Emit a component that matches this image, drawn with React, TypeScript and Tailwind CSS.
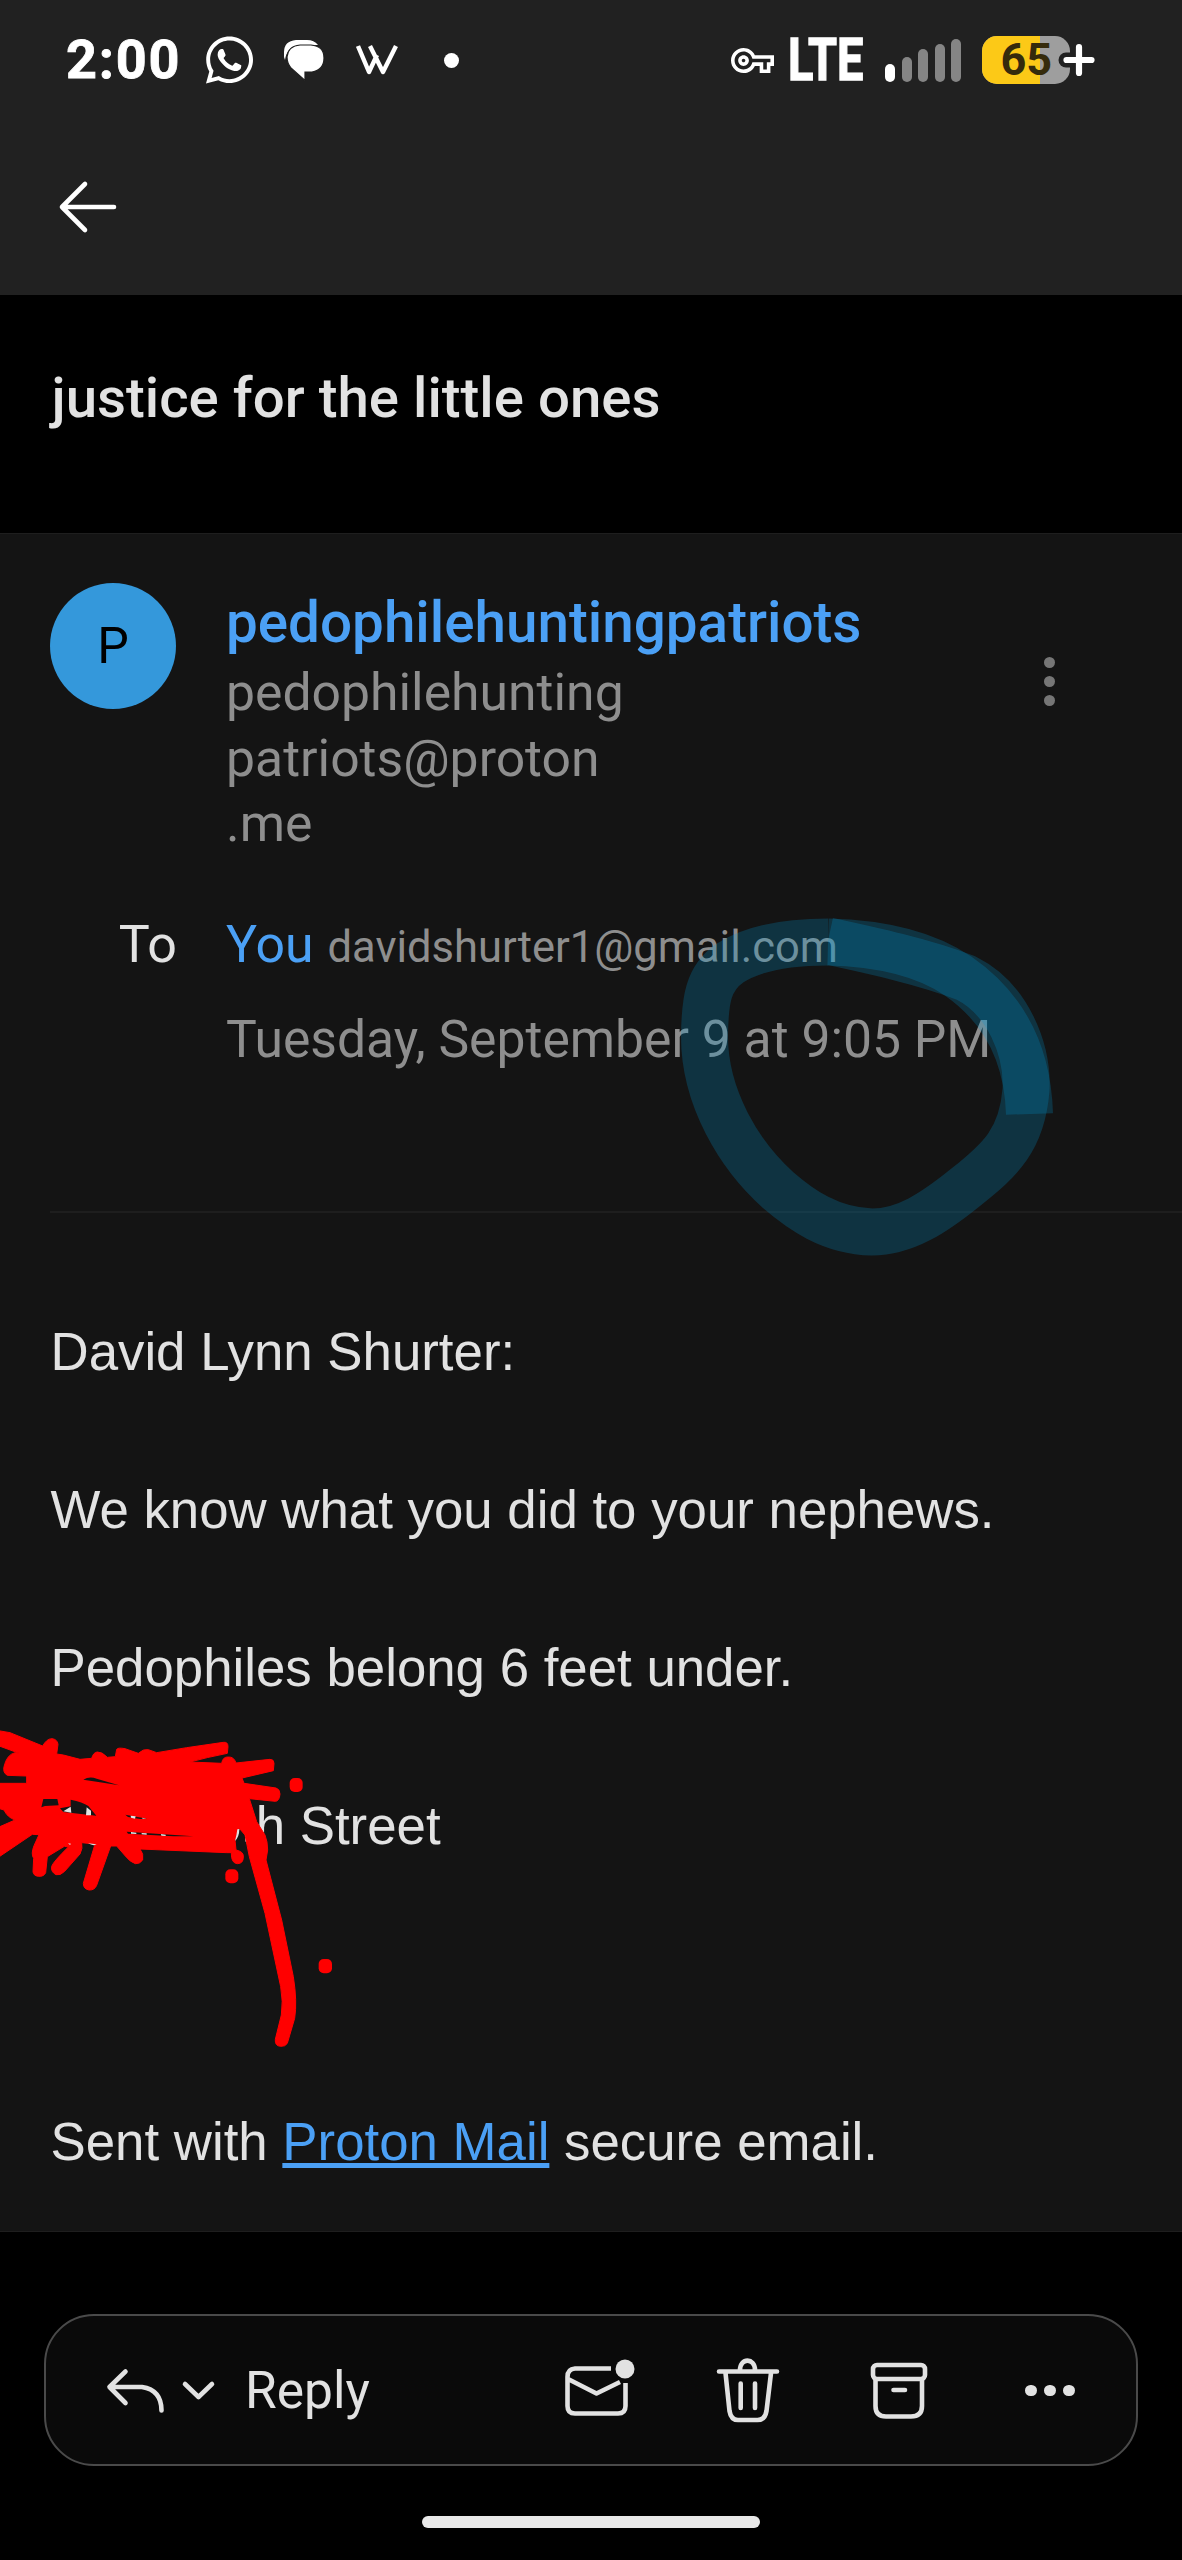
import type { ReactNode } from "react";
import { FaWhatsapp } from "react-icons/fa";
import { MdOutlineVpnKey } from "react-icons/md";

function ChatIcon() {
  return (
    <svg className="ml-[30px] h-[42px] w-[42px] shrink-0" viewBox="0 0 42 42">
      <path d="M1 18V13Q1 2 13 1H24Q31 1 35 6H17Q4 7 2 21Z" fill="#fff" />
      <path
        d="M17 6H28Q41 7 41 19T29 33H22V41.500L8 29Q4 24 4 18Q5 7 17 6Z"
        fill="#fff"
        stroke="#212121"
        strokeWidth="1.200"
      />
    </svg>
  );
}

function WIcon() {
  return (
    <svg
      className="ml-[31px] h-[30px] w-[42px] shrink-0"
      viewBox="0 0 42 30"
      fill="none"
      stroke="#fff"
      strokeWidth="4.400"
      strokeLinejoin="round"
    >
      <path d="M2 1L13 27L21 10M14 1L27 27L40 1" />
    </svg>
  );
}

function SignalBars() {
  return (
    <div className="ml-[20px] flex h-[43px] shrink-0 items-end gap-[6.600px]">
      <i className="h-[18px] w-[10px] rounded-full bg-white" />
      <i className="h-[25px] w-[10px] rounded-full bg-[#858585]" />
      <i className="h-[33px] w-[10px] rounded-full bg-[#858585]" />
      <i className="h-[38px] w-[10px] rounded-full bg-[#858585]" />
      <i className="h-[43px] w-[10px] rounded-full bg-[#858585]" />
    </div>
  );
}

function Battery() {
  return (
    <div className="relative ml-[21px] h-[48px] w-[88px] shrink-0">
      <div className="flex h-full w-full overflow-hidden rounded-[15px] bg-[#9e9e9e]">
        <div className="h-full w-[58px] bg-[#fcc917]" />
      </div>
      <span className="absolute top-0 left-[18px] font-[Roboto,sans-serif] text-[45px] leading-[48px] font-bold text-[#352b0c]">
        65
      </span>
      <svg className="absolute top-[4px] left-[76px] h-[40px] w-[40px]" viewBox="0 0 40 40" strokeLinecap="round">
        <path d="M8 20H12" stroke="#212121" strokeWidth="15" />
        <path d="M8.500 20H33.500M21 7V33" stroke="#fff" strokeWidth="6.200" />
      </svg>
    </div>
  );
}

function StatusBar() {
  return (
    <div className="flex h-[120px] items-center pl-[66px]">
      <span className="w-[116px] shrink-0 text-[54px] leading-[64px] font-bold tracking-[1.800px] text-white [-webkit-text-stroke:0.8px_white]">
        2:00
      </span>
      <FaWhatsapp className="ml-[24px] h-[54px] w-[47px] shrink-0 text-white" />
      <ChatIcon />
      <WIcon />
      <i className="ml-[46px] size-[15px] shrink-0 rounded-full bg-white" />
      <MdOutlineVpnKey className="ml-[272px] size-[43px] shrink-0 text-white" />
      <span className="ml-[14px] w-[77px] shrink-0 origin-left scale-x-[0.780] text-[60px] leading-[64px] font-bold text-white [-webkit-text-stroke:1.5px_white]">
        LTE
      </span>
      <SignalBars />
      <Battery />
    </div>
  );
}

function BackArrow() {
  return (
    <svg
      className="mt-[57px] ml-[57px] h-[60px] w-[60px]"
      viewBox="0 0 60 60"
      fill="none"
      stroke="#fff"
      strokeWidth="4.600"
      strokeLinecap="round"
      strokeLinejoin="round"
    >
      <path d="M28 7L5 30L28 53M5 30H57" />
    </svg>
  );
}

function MessageHeader() {
  return (
    <header className="flex h-[677px] pt-[49px] pl-[50px]">
      <div className="w-[176px] shrink-0">
        <div className="flex size-[126px] items-center justify-center rounded-full bg-[#3498db] text-[50px] leading-none text-black">
          P
        </div>
        <div className="mt-[206px] w-[127px] text-right text-[52px] leading-[60px] text-[#e2e2e2]">To</div>
      </div>
      <div className="w-[780px] shrink-0 pt-[7px]">
        <h2 className="text-[56.600px] leading-[66px] font-medium text-[#4ba0f5]">pedophilehuntingpatriots</h2>
        <p className="mt-[4px] text-[51.700px] leading-[65.600px] text-[#8e8e8e]">
          pedophilehunting
          <br />
          patriots@proton
          <br />
          .me
        </p>
        <p className="mt-[58px] flex h-[60px] items-baseline gap-[14px] leading-[60px]">
          <span className="text-[51.800px] text-[#4ba0f5]">You</span>
          <span className="text-[43.500px] text-[#8e8e8e]">davidshurter1@gmail.com</span>
        </p>
        <p className="mt-[35px] text-[51.650px] leading-[60px] whitespace-nowrap text-[#8e8e8e]">
          Tuesday, September 9 at 9:05 PM
        </p>
      </div>
      <div className="flex w-[86px] flex-col items-center gap-[8px] pt-[74px]">
        <i className="size-[11px] rounded-full bg-[#767676]" />
        <i className="size-[11px] rounded-full bg-[#767676]" />
        <i className="size-[11px] rounded-full bg-[#767676]" />
      </div>
    </header>
  );
}

function Line({ children }: { children?: ReactNode }) {
  return <p className="h-[79.100px] whitespace-nowrap">{children}</p>;
}

function MessageBody() {
  return (
    <div className="pt-[98.500px] pl-[50.500px] font-['Liberation_Sans',Arial,sans-serif] text-[52.800px] leading-[79.100px] text-[#e2e2e2]">
      <Line>David Lynn Shurter:</Line>
      <Line />
      <Line>We know what you did to your nephews.</Line>
      <Line />
      <Line>Pedophiles belong 6 feet under.</Line>
      <Line />
      <Line>
        <span className="pl-[190.500px]">th Street</span>
      </Line>
      <Line />
      <Line />
      <Line />
      <Line>
        Sent with{" "}
        <span className="text-[#4ba0f5] underline decoration-[5px] underline-offset-[3px] [text-decoration-skip-ink:none]">
          Proton Mail
        </span>{" "}
        secure email.
      </Line>
    </div>
  );
}

/* Translucent marker loop around the time of day. */
function HighlighterLoop() {
  return (
    <svg
      className="pointer-events-none absolute top-[880px] left-[660px] h-[400px] w-[420px]"
      viewBox="660 880 420 400"
      fill="none"
      stroke="#0096d2"
      strokeOpacity="0.240"
      strokeWidth="47"
      strokeLinejoin="round"
    >
      <path d="M828 941C870 950 925 962 966 978C1008 999 1028 1050 1026 1090C1022 1140 1000 1160 966 1187C934 1213 905 1232 872 1232C830 1231 800 1209 778 1190C740 1156 704 1098 704.500 1035C705 1000 708 978 730 963C755 947 792 942 828 942" />
      <path d="M828 942C870 943 920 950 958 976C1010 1012 1028 1062 1029.500 1114" />
    </svg>
  );
}

/* Red scribble that hides the house number. */
function Scribble() {
  return (
    <svg className="pointer-events-none absolute top-[1700px] left-0 h-[380px] w-[480px]" viewBox="0 0 1440 1140">
      <path
        fill="#ff0000"
        stroke="#ff0000"
        strokeWidth="3"
        strokeLinejoin="round"
        d="M-5 92L30 98L128 138Q140 116 156 116Q172 118 174 133L170 162L190 165L240 178L275 175Q280 157 292 156Q306 155 322 172L346 170L350 148Q354 142 375 146L415 160Q430 146 445 149L470 158L560 143L670 127Q684 125 684 140L682 160Q620 172 570 186L665 190Q668 170 685 171Q702 170 708 189L810 178Q822 178 822 190L820 212L726 234L732 250L828 264Q840 268 840 282Q838 304 826 304L748 296L770 365L795 405Q803 425 803 450L798 480L845 660L880 830Q892 905 884 955L862 1030Q856 1040 842 1039Q824 1038 826 1018L844 945Q850 905 842 860L795 640L748 470L735 405L718 385L705 420L708 450Q732 455 730 471Q730 491 712 491Q693 490 694 458L680 458L420 447Q432 462 428 480Q420 492 406 491Q390 486 376 468L350 438L332 438L290 556Q284 571 267 570Q250 567 250 550L285 432L245 428Q249 445 240 462L194 514Q180 528 168 524Q152 516 155 499Q160 485 205 441L193 439L142 470L137 518Q132 530 115 529Q100 527 99 515L101 475Q92 462 102 437L117 404L97 403L-5 472V382L45 360Q22 352 12 330L-5 325V250L80 250V228L22 226Q8 218 12 200Q20 164 45 158L58 160L-5 137Z"
      />
      <g fill="#ff0000">
        <rect x="869" y="234" width="39" height="42" rx="15" />
        <rect x="676" y="508" width="39" height="42" rx="15" />
        <rect x="956" y="777" width="40" height="43" rx="15" />
      </g>
      <g fill="#141414">
        <path d="M250 239Q268 228 290 236L357 256L300 247Z" />
        <path d="M130 297H172L176 316L135 318L124 322Z" />
        <path d="M212 299Q248 306 265 318L289 347L190 336L180 325L212 319Z" />
        <path d="M376 344L442 356L420 357L384 351Z" />
        <path d="M380 395L580 409L520 409L384 401Z" />
      </g>
      <g fill="#e2e2e2">
        <path d="M190 334L212 320L214 338Z" />
        <path d="M260 322L273 332V346H258Z" />
        <path d="M392 347L407 349L405 356L393 353ZM426 353L440 356H428Z" />
        <path d="M393 396L409 398V402L393 401ZM425 399L440 400V404L425 403ZM483 402L497 404V408L484 407Z" />
        <path d="M204 430L213 431L210 435ZM264 430L290 433Q280 439 264 430Z" />
        <path d="M712 388L718 387Q718 410 705 423Q710 405 712 388Z" />
      </g>
    </svg>
  );
}

const stroke = {
  fill: "none",
  stroke: "#e2e2e2",
  strokeWidth: 4.6,
  strokeLinecap: "round",
  strokeLinejoin: "round",
} as const;

function BottomBar() {
  return (
    <nav className="mx-[44px] mt-[82px] flex h-[152px] items-center rounded-[50px] border-2 border-[#4a4a4a] bg-[#0a0a0a] pl-[59px]">
      <svg className="h-[50px] w-[62px] shrink-0" viewBox="105 2365 62 50" {...stroke}>
        <path d="M125.500 2371.500L109.500 2387L125.500 2403M109.500 2387H142C155 2389 161.500 2397 161.500 2410.500" />
      </svg>
      <svg className="ml-[14px] h-[50px] w-[36px] shrink-0" viewBox="181 2367 36 50" {...stroke}>
        <path d="M185 2386L198.500 2399L212 2386" />
      </svg>
      <span className="ml-[28px] w-[124px] shrink-0 pt-[2px] text-[51.500px] leading-[60px] text-[#e2e2e2]">Reply</span>
      <svg className="ml-[193px] h-[70px] w-[80px] shrink-0" viewBox="562 2355 80 70" {...stroke}>
        <path
          strokeLinecap="butt"
          d="M611 2368.500H575Q567.500 2369 567.500 2377V2406Q567.500 2413.500 575 2413.500H618Q625.500 2413.500 625.500 2406V2383M568 2379L596.500 2393.500L620 2382"
        />
        <circle cx="625" cy="2369" r="9.500" fill="#e2e2e2" stroke="none" />
      </svg>
      <svg className="ml-[71px] h-[70px] w-[70px] shrink-0" viewBox="713 2355 70 70" {...stroke}>
        <path d="M719 2371.500H777M740 2370C740 2357.500 755 2357.500 755 2370M725.500 2373L729.500 2411Q731 2420 738 2420H757.500Q765 2420 766.500 2411L771 2373M740.700 2383.500V2408M755 2383.500V2408" />
      </svg>
      <svg className="ml-[84px] h-[70px] w-[64px] shrink-0" viewBox="867 2355 64 70" {...stroke}>
        <rect x="873" y="2365" width="52" height="14" rx="4" />
        <path d="M875.500 2379V2406Q875.500 2416.500 886 2416.500H911Q922 2416.500 922 2406V2379M893.500 2390H905" />
      </svg>
      <div className="ml-[94px] flex items-center gap-[7.500px] pt-[1px]">
        <i className="size-[11.500px] rounded-full bg-[#e2e2e2]" />
        <i className="size-[11.500px] rounded-full bg-[#e2e2e2]" />
        <i className="size-[11.500px] rounded-full bg-[#e2e2e2]" />
      </div>
    </nav>
  );
}

export default function App() {
  return (
    <div className="relative h-[2560px] w-[1182px] overflow-hidden bg-black font-[Roboto,sans-serif]">
      <div className="h-[295px] bg-[#212121]">
        <StatusBar />
        <BackArrow />
      </div>
      <h1 className="h-[238px] pt-[70px] pl-[51.500px] text-[56.400px] leading-[66px] font-medium text-[#e2e2e2]">
        justice for the little ones
      </h1>
      <main className="h-[1699px] border-y border-[#1e1e1e] bg-[#141414]">
        <MessageHeader />
        <hr className="ml-[50px] border-t-2 border-[#1e1e1e]" />
        <MessageBody />
      </main>
      <BottomBar />
      <div className="mx-auto mt-[50px] h-[12px] w-[338px] rounded-full bg-[#e9e9e9]" />
      <HighlighterLoop />
      <Scribble />
    </div>
  );
}
